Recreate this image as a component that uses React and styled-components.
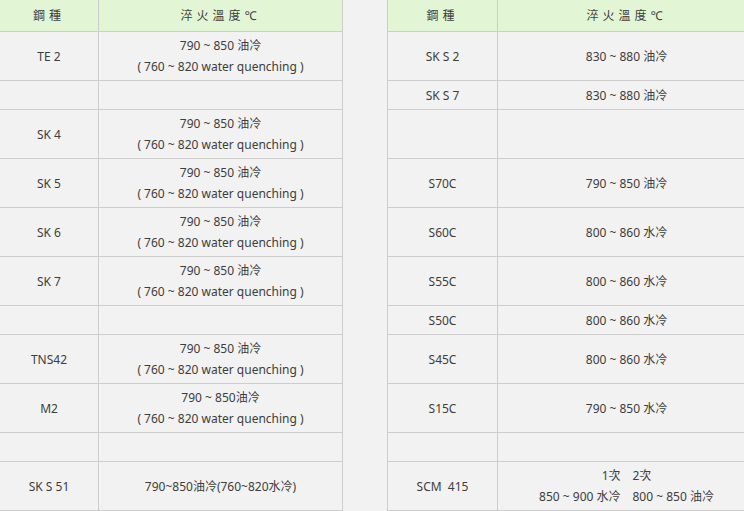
import React from 'react';
import styled, { createGlobalStyle } from 'styled-components';

const GlobalStyle = createGlobalStyle`
  html, body {
    margin: 0;
    padding: 0;
    background: #f2f2f2;
    overflow: hidden;
  }
`;

const Page = styled.div`
  display: flex;
  align-items: flex-start;
  gap: 44px;
  width: 744px;
  height: 511px;
  overflow: hidden;
  font-family: "Noto Sans", "Noto Sans CJK TC", sans-serif;
  font-size: 12px;
  color: #3d3d3d;
`;

const Table = styled.div`
  display: grid;
  grid-template-columns: ${(p) => p.$cols};
  flex-shrink: 0;
  border-left: ${(p) => (p.$edge ? '1px solid #cdcdcd' : 'none')};
`;

const Cell = styled.div`
  box-sizing: border-box;
  height: ${(p) => (p.$head ? 32 : p.$tall ? 49 : 29)}px;
  border-right: 1px solid #cdcdcd;
  border-bottom: 1px solid #cdcdcd;
  background: ${(p) => (p.$head ? '#e2f6d5' : '#f2f2f2')};
  display: flex;
  flex-direction: column;
  align-items: center;
  justify-content: center;
  text-align: center;
  line-height: 21px;
  white-space: pre;
  letter-spacing: ${(p) => (p.$head ? '4px' : 'normal')};
`;

const left = [
  ['TE 2', ['790 ~ 850 油冷', '( 760 ~ 820 water quenching )'], true],
  ['', [], false],
  ['SK 4', ['790 ~ 850 油冷', '( 760 ~ 820 water quenching )'], true],
  ['SK 5', ['790 ~ 850 油冷', '( 760 ~ 820 water quenching )'], true],
  ['SK 6', ['790 ~ 850 油冷', '( 760 ~ 820 water quenching )'], true],
  ['SK 7', ['790 ~ 850 油冷', '( 760 ~ 820 water quenching )'], true],
  ['', [], false],
  ['TNS42', ['790 ~ 850 油冷', '( 760 ~ 820 water quenching )'], true],
  ['M2', ['790 ~ 850油冷', '( 760 ~ 820 water quenching )'], true],
  ['', [], false],
  ['SK S 51', ['790~850油冷(760~820水冷)'], true],
];

const right = [
  ['SK S 2', ['830 ~ 880 油冷'], true],
  ['SK S 7', ['830 ~ 880 油冷'], false],
  ['', [], true],
  ['S70C', ['790 ~ 850 油冷'], true],
  ['S60C', ['800 ~ 860 水冷'], true],
  ['S55C', ['800 ~ 860 水冷'], true],
  ['S50C', ['800 ~ 860 水冷'], false],
  ['S45C', ['800 ~ 860 水冷'], true],
  ['S15C', ['790 ~ 850 水冷'], true],
  ['', [], false],
  ['SCM  415', ['1次　2次', '850 ~ 900 水冷　800 ~ 850 油冷'], true],
];

function SteelTable({ rows, cols, edge }) {
  return (
    <Table $cols={cols} $edge={edge}>
      <Cell $head>鋼種</Cell>
      <Cell $head>淬火溫度℃</Cell>
      {rows.map(([name, lines, tall], i) => (
        <React.Fragment key={i}>
          <Cell $tall={tall}>{name}</Cell>
          <Cell $tall={tall}>
            {lines.map((l, j) => (
              <span key={j}>{l}</span>
            ))}
          </Cell>
        </React.Fragment>
      ))}
    </Table>
  );
}

export default function App() {
  return (
    <>
      <GlobalStyle />
      <Page>
        <SteelTable rows={left} cols="99px 244px" />
        <SteelTable rows={right} cols="110px 258px" edge />
      </Page>
    </>
  );
}
